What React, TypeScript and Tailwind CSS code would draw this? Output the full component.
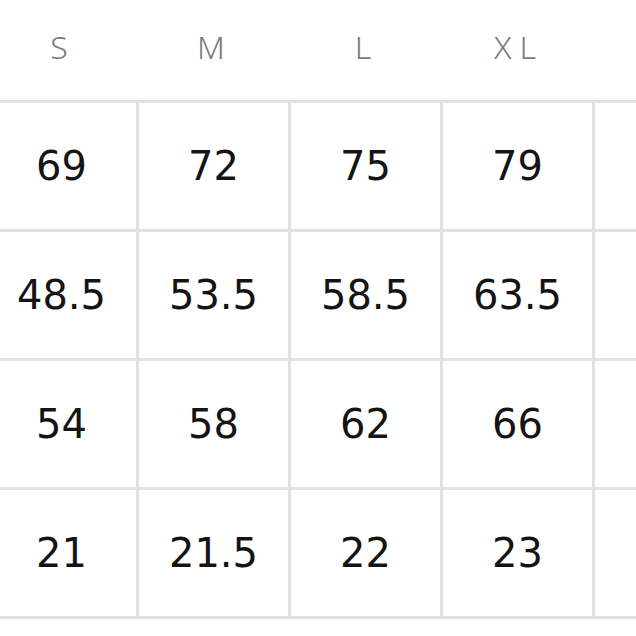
import React from 'react';

const sizes = ['S', 'M', 'L', 'XL', ''];

const rows: string[][] = [
  ['69', '72', '75', '79', ''],
  ['48.5', '53.5', '58.5', '63.5', ''],
  ['54', '58', '62', '66', ''],
  ['21', '21.5', '22', '23', ''],
];

const SizeTable: React.FC = () => {
  return (
    <div className="ml-[-13px] w-[760px]">
      <div className="flex h-[100px]">
        {sizes.map((s, i) => (
          <div
            key={i}
            className="w-[152px] flex items-center justify-center pb-[6px] text-[32px] text-[#7b7b7b] tracking-[8px] font-light"
            style={{ fontFamily: '"Noto Sans", sans-serif' }}
          >
            {s}
          </div>
        ))}
      </div>
      <div className="border-t-[3px] border-[#e2e2e2]">
        {rows.map((row, r) => (
          <div key={r} className="flex h-[129px] border-b-[3px] border-[#e2e2e2]">
            {row.map((v, c) => (
              <div
                key={c}
                className="w-[152px] border-r-[3px] border-[#e2e2e2] flex items-center justify-center text-[40px] text-[#141414]"
                style={{ fontFamily: '"DejaVu Sans", sans-serif' }}
              >
                {v}
              </div>
            ))}
          </div>
        ))}
      </div>
    </div>
  );
};

export default function App() {
  return (
    <div className="w-[636px] h-[636px] bg-white overflow-hidden">
      <SizeTable />
    </div>
  );
}
